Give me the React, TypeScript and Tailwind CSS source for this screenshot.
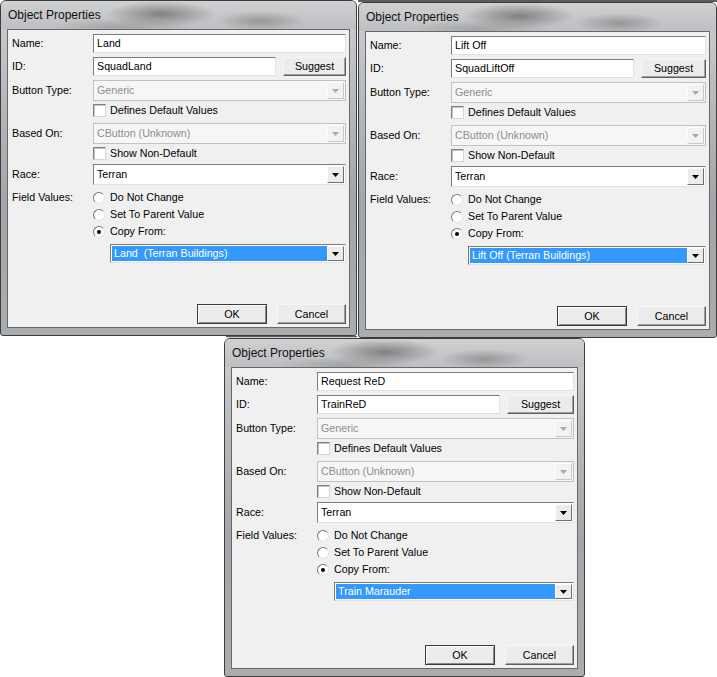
import type { ReactNode } from 'react'

const FONT = "font-['Liberation_Sans',Arial,sans-serif]"

function Arrow({ disabled = false }: { disabled?: boolean }) {
  return (
    <div
      className={
        disabled
          ? 'w-[17px] h-full shrink-0 flex items-center justify-center bg-[#f2f2f2] border border-t-[#fbfbfb] border-l-[#fbfbfb] border-b-[#c9c9c9] border-r-[#c9c9c9]'
          : 'w-[17px] h-full shrink-0 flex items-center justify-center bg-[#ececec] border border-t-[#fdfdfd] border-l-[#fdfdfd] border-b-[#6f6f6f] border-r-[#6f6f6f]'
      }
    >
      <svg width="7" height="4" viewBox="0 0 7 4">
        <path d="M0 0h7L3.5 4z" fill={disabled ? '#a8a8a8' : '#000'} />
      </svg>
    </div>
  )
}

function TextBox({ value, className = '' }: { value: string; className?: string }) {
  return (
    <div
      className={`h-full flex items-center bg-white border border-t-[#7c7c7c] border-l-[#7c7c7c] border-b-[#e2e2e2] border-r-[#e2e2e2] pl-[3px] text-black ${className}`}
    >
      {value}
    </div>
  )
}

function Combo({
  value,
  disabled = false,
  selected = false,
  className = '',
}: {
  value: string
  disabled?: boolean
  selected?: boolean
  className?: string
}) {
  return (
    <div
      className={`h-full flex items-stretch p-[1px] border ${
        disabled
          ? 'bg-[#f6f6f6] border-[#c2c2c2] text-[#8d8d8d]'
          : 'bg-white border-t-[#7c7c7c] border-l-[#7c7c7c] border-b-[#e2e2e2] border-r-[#e2e2e2] text-black'
      } ${className}`}
    >
      <div
        className={`flex-1 flex items-center pl-[2px] whitespace-pre ${selected ? 'bg-[#3399ff] text-white' : ''}`}
      >
        {value}
      </div>
      <Arrow disabled={disabled} />
    </div>
  )
}

function Btn({ label, primary = false, className = '' }: { label: string; primary?: boolean; className?: string }) {
  return (
    <div
      className={`flex items-center justify-center bg-[#ececec] text-black border ${
        primary
          ? 'border-[#3a3a3a] shadow-[inset_1px_1px_0_#ffffff,inset_-1px_-1px_0_#8a8a8a]'
          : 'border-t-[#f6f6f6] border-l-[#f6f6f6] border-b-[#5e5e5e] border-r-[#5e5e5e] shadow-[inset_-1px_-1px_0_#a0a0a0]'
      } ${className}`}
    >
      {label}
    </div>
  )
}

function Check({ label, className = '' }: { label: string; className?: string }) {
  return (
    <div className={`h-[13px] flex items-center pl-[81px] ${className}`}>
      <div className="w-[13px] h-[13px] bg-white border border-t-[#808080] border-l-[#808080] border-b-[#d6d6d6] border-r-[#d6d6d6] shadow-[inset_1px_1px_0_#c4c4c4]" />
      <span className="ml-[4px]">{label}</span>
    </div>
  )
}

function Radio({ checked = false }: { checked?: boolean }) {
  return (
    <div className="w-[12px] h-[12px] rounded-full bg-white border border-t-[#7a7a7a] border-l-[#7a7a7a] border-b-[#e4e4e4] border-r-[#e4e4e4] flex items-center justify-center">
      {checked && <div className="w-[4px] h-[4px] rounded-full bg-black" />}
    </div>
  )
}

function Row({ label, className = '', children }: { label?: string; className?: string; children: ReactNode }) {
  return (
    <div className={`flex items-center ${className}`}>
      <div className="w-[81px] shrink-0">{label}</div>
      <div className="flex-1 flex items-center h-full">{children}</div>
    </div>
  )
}

function Dialog({
  name,
  id,
  copyFrom,
  className,
}: {
  name: string
  id: string
  copyFrom: string
  className: string
}) {
  return (
    <div
      className={`flex flex-col shrink-0 rounded-t-[6px] rounded-b-[3px] border border-[#3d3d3d] overflow-hidden bg-[linear-gradient(180deg,#cdcfd1_0%,#b9bcbf_25%,#a2a5a9_60%,#aaadb0_100%)] ${className}`}
    >
      <div className="h-[28px] shrink-0 flex items-center pl-[7px] text-[12px] text-[#111] bg-[radial-gradient(ellipse_55px_13px_at_160px_13px,rgba(70,70,70,0.55),transparent),radial-gradient(ellipse_45px_10px_at_260px_20px,rgba(95,95,95,0.45),transparent),radial-gradient(ellipse_70px_9px_at_120px_26px,rgba(120,120,120,0.4),transparent),linear-gradient(180deg,#cfd0d2,#bdbfc2)]">
        Object Properties
      </div>
      <div className="flex-1 mx-[6px] mb-[7px] border border-[#686868] bg-[#f0f0f0] flex flex-col pt-[4px] pl-[4px] pr-[3px] pb-[3px] text-[10.7px] text-black">
        <Row label="Name:" className="h-[19px]">
          <TextBox value={name} className="flex-1" />
        </Row>
        <Row label="ID:" className="h-[19px] mt-[4px]">
          <TextBox value={id} className="w-[183px]" />
          <Btn label="Suggest" className="flex-1 h-full ml-[7px]" />
        </Row>
        <Row label="Button Type:" className="h-[21px] mt-[4px]">
          <Combo value="Generic" disabled className="flex-1" />
        </Row>
        <Check label="Defines Default Values" className="mt-[3px]" />
        <Row label="Based On:" className="h-[21px] mt-[6px]">
          <Combo value="CButton (Unknown)" disabled className="flex-1" />
        </Row>
        <Check label="Show Non-Default" className="mt-[3px]" />
        <Row label="Race:" className="h-[21px] mt-[4px]">
          <Combo value="Terran" className="flex-1" />
        </Row>
        <Row label="Field Values:" className="h-[17px] mt-[4px]">
          <Radio />
          <span className="ml-[5px]">Do Not Change</span>
        </Row>
        <Row className="h-[17px]">
          <Radio />
          <span className="ml-[5px]">Set To Parent Value</span>
        </Row>
        <Row className="h-[17px]">
          <Radio checked />
          <span className="ml-[5px]">Copy From:</span>
        </Row>
        <div className="h-[19px] mt-[4px] ml-[98px] flex">
          <Combo value={copyFrom} selected className="flex-1" />
        </div>
        <div className="mt-auto flex justify-end gap-[10px] h-[20px]">
          <Btn label="OK" primary className="w-[70px] h-full" />
          <Btn label="Cancel" className="w-[69px] h-full" />
        </div>
      </div>
    </div>
  )
}

export default function App() {
  return (
    <div className={`w-[717px] h-[677px] bg-white overflow-hidden ${FONT}`}>
      <div className="flex h-[338px]">
        <div className="w-[358px] shrink-0 h-full flex flex-col">
          <Dialog name="Land" id="SquadLand" copyFrom="Land  (Terran Buildings)" className="w-[357px] h-[336px]" />
          <div className="flex-1 ml-[226px] mr-[1px] bg-[#cfcfcf] border-t border-[#5a5a5a]" />
        </div>
        <div className="flex-1 h-full flex flex-col pt-[2px] bg-[linear-gradient(180deg,#5c5c5c_0px,#5c5c5c_2px,#ffffff_2px)]">
          <Dialog name="Lift Off" id="SquadLiftOff" copyFrom="Lift Off (Terran Buildings)" className="w-[359px] h-[336px]" />
        </div>
      </div>
      <div className="pl-[224px]">
        <Dialog name="Request ReD" id="TrainReD" copyFrom="Train Marauder" className="w-[361px] h-[339px]" />
      </div>
    </div>
  )
}
